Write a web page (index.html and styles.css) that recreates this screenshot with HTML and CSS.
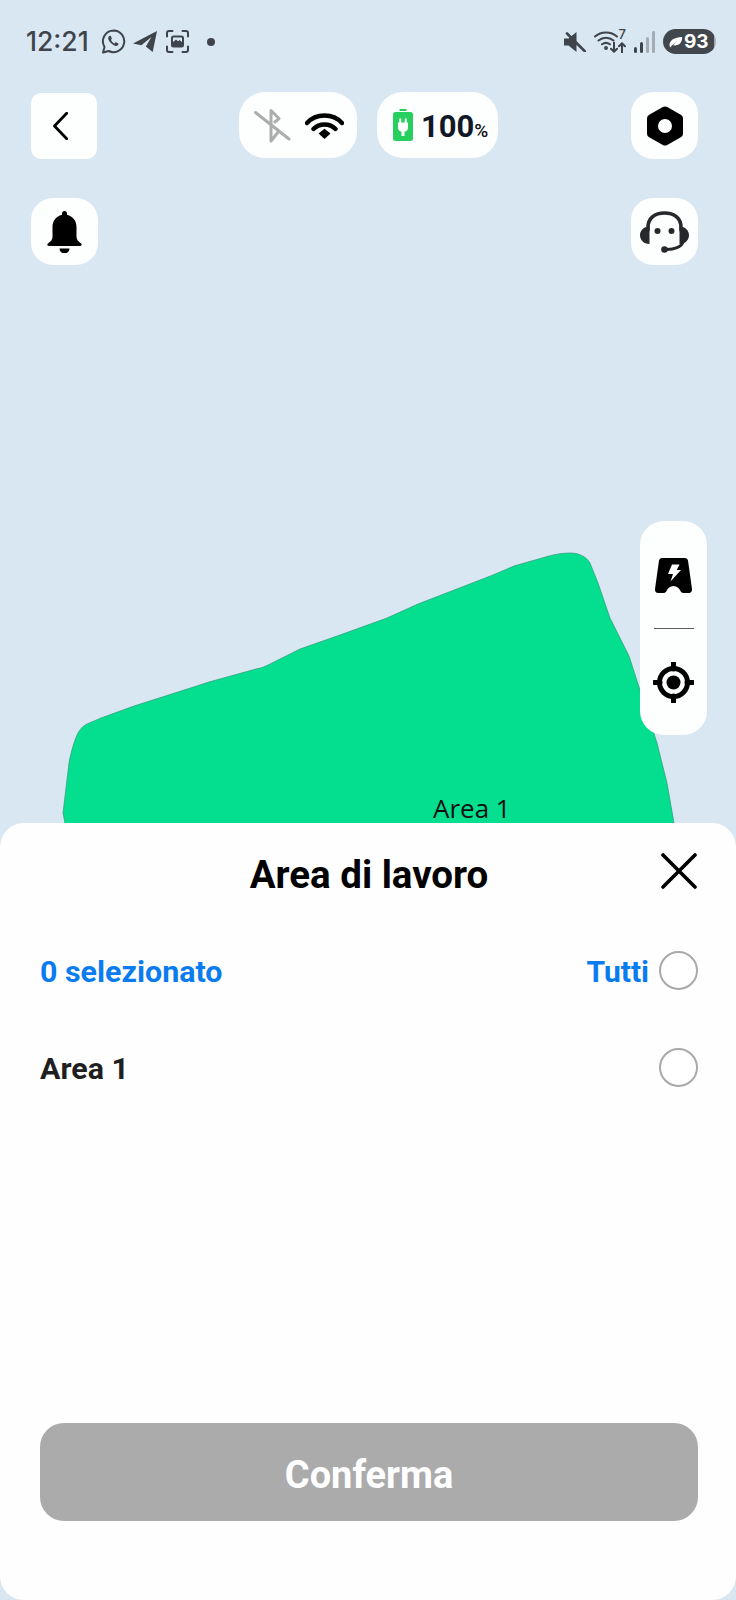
FILE: index.html
```html
<!DOCTYPE html>
<html lang="it">
<head>
<meta charset="utf-8">
<title>Area di lavoro</title>
<link rel="stylesheet" href="styles.css">
</head>
<body>
<div class="page">
  <svg class="map" viewBox="0 0 736 1600" aria-hidden="true">
    <path class="zone" d="M87 724 101 718 134 706 178 692 209 682 256 669C262 668 266 666 270 664L300 649 340 635 387 618 418 604 493 575 514 566 549 556C556 554 564 553 570 553 578 553 586 556 590 563L598 583 610 618 629 656 639 687 657 743 667 783 674 823V840H65V823L63 813 69 763C71 752 74 742 77 735 80 729 83 726 87 724Z"/>
  </svg>
  <span class="zone-label">Area 1</span>

  <header class="status">
    <div class="status-group">
      <span class="time">12:21</span>
      <svg class="i-wa" viewBox="0 0 25 25"><path class="st-line" d="M12.7 1.5a10.8 10.8 0 0 0-9.2 16.4L2 23.5l5.700-1.500A10.800 10.800 0 1 0 12.700 1.500z"/><path class="st-fill" d="M9 6.800c-.4 0-.9.2-1.300.8-.6.9-.7 1.900-.3 3 .8 2.300 3.600 5.100 6.500 6.100 1.300.4 2.400.1 3.100-.7.400-.5.500-1 .4-1.500l-2.300-1.200c-.3-.1-.6-.1-.8.200l-.7.900c-1.400-.5-2.900-2-3.600-3.500l.6-.8c.2-.2.3-.5.1-.8L10 7.300c-.2-.4-.5-.5-1-.5z"/></svg>
      <svg class="i-tg" viewBox="0 0 24 21"><path class="st-fill" d="M0 12.400 24 0 19.700 21 12.800 15.400 18.500 6 8.300 14.200z"/></svg>
      <svg class="i-shot" viewBox="0 0 23 23"><path class="st-line" d="M1 6.500V3a2 2 0 0 1 2-2h3.500M16.500 1H20a2 2 0 0 1 2 2v3.500M22 16.500V20a2 2 0 0 1-2 2h-3.500M6.500 22H3a2 2 0 0 1-2-2v-3.500"/><rect class="st-line" x="6" y="6.500" width="11" height="10" rx="1.500"/><path class="st-fill" d="M6.500 12.500 10 9.500l2 1.800 1.500-1.300 3 2.500v3.500h-10z"/></svg>
      <span class="dot"></span>
    </div>
    <div class="status-group right">
      <svg class="i-mute" viewBox="0 0 22 20"><path class="st-fill" d="M0 6.500h4.500L12.500 0v20l-8-6.500H0z"/><path class="st-line wide" d="M3 1.500 21 19.500"/></svg>
      <div class="net">
        <svg class="i-wifi" viewBox="0 0 24 20"><path class="st-line" d="M1 6.500C7 1 17 1 23 6.500M4.500 10.500C9 6.800 15 6.800 19.500 10.500M8 14.300c2.500-1.800 5.500-1.800 8 0"/><circle class="st-fill" cx="12" cy="18" r="2"/></svg>
        <span class="net-num">7</span>
        <svg class="i-arrows" viewBox="0 0 16 11"><path class="st-line" d="M4 0v9.500M1 6.800l3 3 3-3M12 11V1.500M9 4.200l3-3 3 3"/></svg>
      </div>
      <div class="signal"><i class="bar b1"></i><i class="bar b2"></i><i class="bar b3"></i><i class="bar b4"></i></div>
      <div class="batt">
        <svg class="i-leaf" viewBox="0 0 18 14"><path class="leaf" d="M2 12C1 6 6 1.500 17 1c0 7-4 11-11 10l5-5-6.500 5.200L3 13.500z"/></svg>
        <span>93</span>
      </div>
    </div>
  </header>

  <div class="toolbar">
    <button class="tile square" aria-label="Indietro">
      <svg class="i-back" viewBox="0 0 15 28"><path d="M13.700 1.300 1.500 14l12.200 12.700"/></svg>
    </button>
    <div class="pills">
      <div class="pill conn">
        <svg class="i-bt" viewBox="0 0 37 35"><path d="M11 12 25 23 17 33V2.500L25 10.500 21 14M1.500 4.500 35 31"/></svg>
        <svg class="i-link" viewBox="0 0 39 27"><path class="arc" d="M2 11C11 1 28 1 37 11M8.500 17C14 11 25 11 30.500 17"/><path d="M13.500 21.500 19.500 16.800 25.500 21.500 19.500 27z"/></svg>
      </div>
      <div class="pill power">
        <svg class="i-batt" viewBox="0 0 20 32"><path class="cap" d="M6.500 1h7"/><rect class="body" y="3" width="20" height="29" rx="2.500"/><path class="plug" d="M6.300 9.500h1.900v4h3.600v-4h1.900v4H15v5.500c0 2-1.500 3.300-3.500 3.700V27H8.500v-4.300C6.500 22.300 5 21 5 19v-5.500h1.300z"/></svg>
        <span class="pct">100<small>%</small></span>
      </div>
    </div>
    <button class="tile" aria-label="Impostazioni">
      <svg class="i-gear" viewBox="0 0 36 40"><path d="M15.800 1 2.200 8.800A4 4 0 0 0 0 12.300v15.400a4 4 0 0 0 2.200 3.500L15.800 39a4.500 4.500 0 0 0 4.400 0l13.600-7.800a4 4 0 0 0 2.200-3.500V12.300a4 4 0 0 0-2.200-3.500L20.200 1a4.500 4.500 0 0 0-4.400 0zM18 27a7 7 0 1 1 0-14 7 7 0 0 1 0 14z"/></svg>
    </button>
  </div>

  <div class="toolbar second">
    <button class="tile" aria-label="Notifiche">
      <svg class="i-bell" viewBox="0 0 35 42"><path d="M15 2.500a2.500 2.500 0 0 1 5 0v1.300C26 5.200 29.500 10 29.500 16v10c0 2.500 2 4.500 4 6 1.500 1 1.800 3-.5 3H2c-2.300 0-2-2-.5-3 2-1.500 4-3.500 4-6V16C5.500 10 9 5.200 15 3.800z"/><path d="M12.500 37.500h10a5 5 0 0 1-10 0z"/></svg>
    </button>
    <button class="tile" aria-label="Assistenza">
      <svg class="i-head" viewBox="0 0 49 42"><path class="hs-line" d="M8 19V16.500C8 7 15 2 24.500 2S41 7 41 16.500V19"/><path class="hs-line thin" d="M43 31C41.500 36 34 38.500 27 38.500"/><path class="hs-fill" d="M9.500 15.500V33C3.500 33 0 28.500 0 24.200S3.500 15.500 9.500 15.500zM39.500 15.500V33C45.500 33 49 28.500 49 24.200S45.500 15.500 39.500 15.500z"/><circle class="hs-fill" cx="17.500" cy="20" r="3"/><circle class="hs-fill" cx="31.500" cy="20" r="3"/><circle class="hs-fill" cx="24.500" cy="38.500" r="3.300"/></svg>
    </button>
  </div>

  <aside class="side">
    <svg class="i-charge" viewBox="0 0 37 35"><path class="ch-body" d="M7 0h23a3 3 0 0 1 3 2.600L37 31c.3 2.300-1 4-3 4h-5c-1.700 0-2.800-.5-3.500-2-1.300-2.800-3.500-5-7-5s-5.700 2.200-7 5c-.7 1.500-1.800 2-3.500 2H3c-2 0-3.300-1.700-3-4L4 2.600A3 3 0 0 1 7 0z"/><path class="ch-bolt" d="M17 6.500h7.500l-2.800 5.500h4.300L15.500 23.500l2.500-7.500h-5z"/></svg>
    <hr class="rule">
    <svg class="i-target" viewBox="0 0 41 41"><circle class="tg-ring" cx="20.500" cy="20.500" r="14"/><circle class="tg-fill" cx="20.500" cy="20.500" r="7"/><path class="tg-tick" d="M20.500 1v6M20.500 34v6M1 20.500h6M34 20.500h6"/></svg>
  </aside>

  <section class="sheet">
    <div class="sheet-head">
      <h1 class="title">Area di lavoro</h1>
      <svg class="i-close" viewBox="0 0 36 36"><path d="M2 2 34 34M34 2 2 34"/></svg>
    </div>
    <div class="row selected">
      <span class="label">0 selezionato</span>
      <div class="all"><span class="label all-label">Tutti</span><span class="radio"></span></div>
    </div>
    <div class="row item">
      <span class="label">Area 1</span>
      <span class="radio"></span>
    </div>
    <button class="confirm">Conferma</button>
  </section>
</div>
</body>
</html>
```
FILE: styles.css
```css
* { box-sizing: border-box; }
html, body { margin: 0; padding: 0; }
body { font-family: Roboto, "Liberation Sans", sans-serif; background: #d9e7f3; }
svg { display: block; flex: none; }
button { border: 0; padding: 0; font: inherit; cursor: pointer; }

.page { position: relative; width: 736px; height: 1600px; display: flex; flex-direction: column; background: #d9e7f3; overflow: hidden; }
.map { position: absolute; left: 0; top: 0; width: 736px; height: 1600px; }
.zone { fill: #03df8f; stroke: #2f9a78; stroke-width: .7; }
.zone-label { position: absolute; left: 433px; top: 790px; font: 400 26px/36px "Open Sans", sans-serif; color: #111; }

/* status bar */
.status { position: relative; display: flex; justify-content: space-between; align-items: center; height: 25px; margin-top: 29px; padding: 0 20px 0 26px; color: #3f444b; }
.status-group { display: flex; align-items: center; }
.status-group.right { gap: 8px; }
.time { font: 500 26.500px/25px Inter, sans-serif; width: 62px; white-space: nowrap; }
.st-line { fill: none; stroke: #3f444b; stroke-width: 2; stroke-linecap: round; stroke-linejoin: round; }
.st-line.wide { stroke-width: 2.6; }
.st-fill { fill: #3f444b; }
.i-wa { width: 25px; height: 25px; margin-left: 13px; }
.i-tg { width: 24px; height: 21px; margin-left: 7px; }
.i-shot { width: 23px; height: 23px; margin-left: 9px; }
.dot { width: 8px; height: 8px; border-radius: 50%; background: #3f444b; margin-left: 18px; }
.i-mute { width: 22px; height: 20px; }
.net { position: relative; width: 32px; height: 23px; }
.i-wifi { width: 24px; height: 20px; }
.net-num { position: absolute; right: 0; top: -3px; font: 500 13px/14px Inter, sans-serif; }
.i-arrows { position: absolute; right: 0; bottom: 0; width: 16px; height: 11px; }
.signal { display: flex; align-items: flex-end; gap: 3px; height: 22px; width: 21px; }
.bar { width: 3px; border-radius: 1.500px; background: #3f444b; }
.b1 { height: 6px; }
.b2 { height: 11px; }
.b3 { height: 16px; background: #a3acb5; }
.b4 { height: 22px; background: #a3acb5; }
.batt { display: flex; align-items: center; gap: 1px; width: 53px; height: 25px; padding-left: 5px; border-radius: 13px; background: linear-gradient(90deg, #42474e 96%, #a3acb5 96%); color: #fff; font: 700 19px/25px Inter, sans-serif; letter-spacing: -.2px; }
.i-leaf { width: 15px; height: 12px; }
.leaf { fill: #fff; }

/* tiles */
.toolbar { position: relative; display: flex; justify-content: space-between; padding: 0 38px 0 31px; margin-top: 38px; }
.toolbar.second { margin-top: 39px; }
.tile { display: flex; align-items: center; justify-content: center; width: 67px; height: 67px; border-radius: 22px; background: #fdfefe; }
.tile.square { width: 66px; height: 66px; margin-top: 1px; border-radius: 10px; }
.pills { display: flex; gap: 20px; margin-left: 9px; }
.pill { display: flex; align-items: center; height: 66px; border-radius: 26px; background: #fdfefe; }
.conn { width: 118px; padding-left: 15px; gap: 14px; }
.power { width: 121px; padding-left: 16px; gap: 9px; }
.i-back { width: 15px; height: 28px; margin-right: 7px; }
.i-back path { fill: none; stroke: #000; stroke-width: 2.800; stroke-linecap: round; stroke-linejoin: round; }
.i-bt { width: 37px; height: 35px; }
.i-bt path { fill: none; stroke: #adadad; stroke-width: 3; stroke-linecap: round; stroke-linejoin: round; }
.i-link { width: 39px; height: 27px; fill: #000; }
.i-link .arc { fill: none; stroke: #000; stroke-width: 4.400; stroke-linecap: round; }
.i-batt { width: 20px; height: 32px; }
.cap { stroke: #27cf5f; stroke-width: 2; fill: none; }
.body { fill: #27cf5f; }
.plug { fill: #fff; }
.pct { font: 700 31px/36px Roboto, sans-serif; color: #111827; white-space: nowrap; padding-top: 7px; margin-left: -1px; }
.pct small { font-size: 19px; font-weight: 500; color: #111; }
.i-gear { width: 36px; height: 40px; fill: #000; fill-rule: evenodd; }
.i-bell { width: 35px; height: 42px; fill: #000; }
.i-head { width: 49px; height: 42px; }
.hs-line { fill: none; stroke: #26282c; stroke-width: 3.600; stroke-linecap: round; }
.hs-line.thin { stroke-width: 2.800; }
.hs-fill { fill: #26282c; }

/* side panel */
.side { position: relative; align-self: flex-end; display: flex; flex-direction: column; align-items: center; width: 67px; height: 214px; margin: 256px 29px 0 0; padding-top: 37px; border-radius: 24px; background: #fdfefe; }
.i-charge { width: 37px; height: 35px; }
.ch-body { fill: #000; }
.ch-bolt { fill: #fff; }
.rule { width: 40px; height: 1px; margin: 35px 0 33px; border: 0; background: #5c5f63; }
.i-target { width: 41px; height: 41px; }
.tg-ring { fill: none; stroke: #000; stroke-width: 5; }
.tg-fill { fill: #000; }
.tg-tick { stroke: #000; stroke-width: 5; stroke-linecap: round; }

/* sheet */
.sheet { position: relative; display: flex; flex-direction: column; flex: 1; margin-top: 88px; padding: 0 38px 79px 40px; border-radius: 24px; background: #fefefe; }
.sheet-head { display: flex; align-items: center; justify-content: center; height: 99px; position: relative; }
.title { margin: 0; font: 700 38.500px/44px Roboto, sans-serif; color: #000; transform: translateY(2px); }
.i-close { position: absolute; right: 1px; top: 30px; width: 36px; height: 36px; }
.i-close path { fill: none; stroke: #000; stroke-width: 3.600; stroke-linecap: round; }
.row { display: flex; align-items: center; justify-content: space-between; height: 97px; font: 700 30.400px/36px Roboto, sans-serif; }
.label { padding-top: 2px; }
.selected { color: #0a7cf0; }
.item { color: #1f1f1f; }
.all { display: flex; align-items: center; gap: 10px; }
.all-label { font-size: 30px; }
.radio { display: block; width: 39px; height: 39px; border: 2px solid #a9a9a9; border-radius: 50%; background: #fff; }
.confirm { display: block; width: 100%; height: 98px; margin-top: auto; padding-top: 6px; border-radius: 24px; background: #ababab; color: #fff; font: 700 38px/92px Roboto, sans-serif; }
```
